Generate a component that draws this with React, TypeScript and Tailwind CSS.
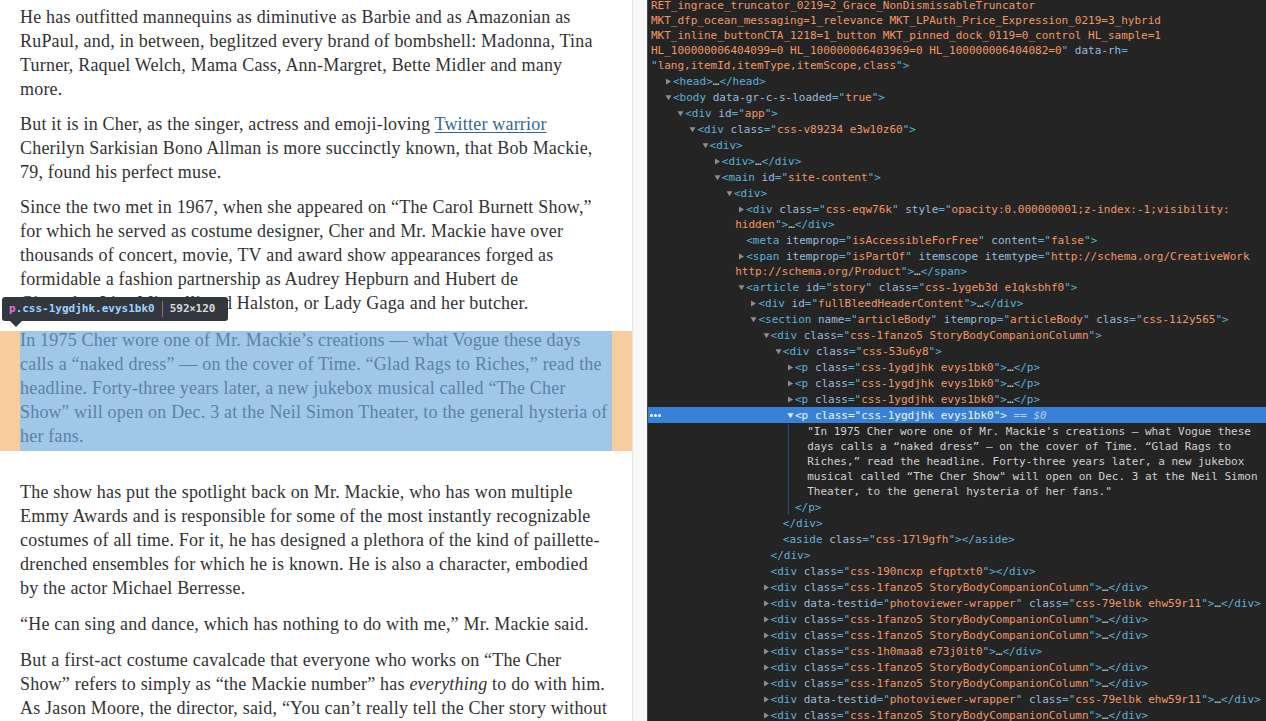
import React from 'react'

type Kind = 't' | 'a' | 'v' | 'x'
type Seg = [Kind, string]

interface INode {
  lvl: number
  tri?: 'r' | 'd'
  lines: Seg[][]
  sel?: boolean
  text?: boolean
  x?: number
}

const COLORS: Record<Kind, string> = {
  t: 'text-[#5db0d7]',
  a: 'text-[#9bbbdc]',
  v: 'text-[#f29766]',
  x: 'text-[#cfd0d0]',
}

// builds the segments of one opening tag, optionally collapsed
const tag = (name: string, attrs: [string, string?][], collapsed?: string, selfClose?: boolean): Seg[] => {
  const segs: Seg[] = [['t', '<' + name]]
  attrs.forEach(([k, v]) => {
    segs.push(['t', ' '], ['a', k])
    if (v !== undefined) segs.push(['t', '="'], ['v', v], ['t', '"'])
  })
  segs.push(['t', '>'])
  if (collapsed) segs.push(['x', '…'], ['t', '</' + collapsed + '>'])
  if (selfClose) segs.push(['t', '</' + name + '>'])
  return segs
}

const fanzo = (): INode => ({
  lvl: 9,
  tri: 'r',
  lines: [tag('div', [['class', 'css-1fanzo5 StoryBodyCompanionColumn']], 'div')],
})
const photo = (): INode => ({
  lvl: 9,
  tri: 'r',
  lines: [tag('div', [['data-testid', 'photoviewer-wrapper'], ['class', 'css-79elbk ehw59r11']], 'div')],
})
const para = (): INode => ({ lvl: 11, tri: 'r', lines: [tag('p', [['class', 'css-1ygdjhk evys1bk0']], 'p')] })

const TOP: INode[] = [
  {
    lvl: 0,
    x: 3,
    lines: [
      [['v', 'RET_ingrace_truncator_0219=2_Grace_NonDismissableTruncator']],
      [['v', 'MKT_dfp_ocean_messaging=1_relevance MKT_LPAuth_Price_Expression_0219=3_hybrid']],
      [['v', 'MKT_inline_buttonCTA_1218=1_button MKT_pinned_dock_0119=0_control HL_sample=1']],
      [
        ['v', 'HL_100000006404099=0 HL_100000006403969=0 HL_100000006404082=0'],
        ['t', '"'],
        ['a', ' data-rh'],
        ['t', '='],
      ],
      [['t', '"'], ['v', 'lang,itemId,itemType,itemScope,class'], ['t', '">']],
    ],
  },
  { lvl: 1, tri: 'r', lines: [tag('head', [], 'head')] },
  { lvl: 1, tri: 'd', lines: [tag('body', [['data-gr-c-s-loaded', 'true']])] },
  { lvl: 2, tri: 'd', lines: [tag('div', [['id', 'app']])] },
  { lvl: 3, tri: 'd', lines: [tag('div', [['class', 'css-v89234 e3w10z60']])] },
  { lvl: 4, tri: 'd', lines: [tag('div', [])] },
  { lvl: 5, tri: 'r', lines: [tag('div', [], 'div')] },
  { lvl: 5, tri: 'd', lines: [tag('main', [['id', 'site-content']])] },
  { lvl: 6, tri: 'd', lines: [tag('div', [])] },
  {
    lvl: 7,
    tri: 'r',
    lines: [
      [
        ['t', '<div'],
        ['t', ' '],
        ['a', 'class'],
        ['t', '="'],
        ['v', 'css-eqw76k'],
        ['t', '"'],
        ['t', ' '],
        ['a', 'style'],
        ['t', '="'],
        ['v', 'opacity:0.000000001;z-index:-1;visibility:'],
      ],
      [['v', 'hidden'], ['t', '">'], ['x', '…'], ['t', '</div>']],
    ],
  },
  { lvl: 7, lines: [tag('meta', [['itemprop', 'isAccessibleForFree'], ['content', 'false']])] },
  {
    lvl: 7,
    tri: 'r',
    lines: [
      [
        ['t', '<span'],
        ['t', ' '],
        ['a', 'itemprop'],
        ['t', '="'],
        ['v', 'isPartOf'],
        ['t', '"'],
        ['t', ' '],
        ['a', 'itemscope'],
        ['t', ' '],
        ['a', 'itemtype'],
        ['t', '="'],
        ['v', 'http://schema.org/CreativeWork'],
      ],
      [['v', 'http://schema.org/Product'], ['t', '">'], ['x', '…'], ['t', '</span>']],
    ],
  },
  { lvl: 7, tri: 'd', lines: [tag('article', [['id', 'story'], ['class', 'css-1ygeb3d e1qksbhf0']])] },
  { lvl: 8, tri: 'r', lines: [tag('div', [['id', 'fullBleedHeaderContent']], 'div')] },
  {
    lvl: 8,
    tri: 'd',
    lines: [tag('section', [['name', 'articleBody'], ['itemprop', 'articleBody'], ['class', 'css-1i2y565']])],
  },
  { lvl: 9, tri: 'd', lines: [tag('div', [['class', 'css-1fanzo5 StoryBodyCompanionColumn']])] },
  { lvl: 10, tri: 'd', lines: [tag('div', [['class', 'css-53u6y8']])] },
  para(),
  para(),
  para(),
  { lvl: 11, tri: 'd', sel: true, lines: [tag('p', [['class', 'css-1ygdjhk evys1bk0']])] },
]

const CHILDREN: INode[] = [
  {
    lvl: 12,
    text: true,
    lines: [
      [['x', '"In 1975 Cher wore one of Mr. Mackie\'s creations — what Vogue these']],
      [['x', 'days calls a “naked dress” — on the cover of Time. “Glad Rags to']],
      [['x', 'Riches,” read the headline. Forty-three years later, a new jukebox']],
      [['x', 'musical called “The Cher Show" will open on Dec. 3 at the Neil Simon']],
      [['x', 'Theater, to the general hysteria of her fans."']],
    ],
  },
  { lvl: 11, lines: [[['t', '</p>']]] },
]

const BOTTOM: INode[] = [
  { lvl: 10, lines: [[['t', '</div>']]] },
  { lvl: 10, lines: [tag('aside', [['class', 'css-17l9gfh']], undefined, true)] },
  { lvl: 9, lines: [[['t', '</div>']]] },
  { lvl: 9, lines: [tag('div', [['class', 'css-190ncxp efqptxt0']], undefined, true)] },
  fanzo(),
  photo(),
  fanzo(),
  fanzo(),
  { lvl: 9, tri: 'r', lines: [tag('div', [['class', 'css-1h0maa8 e73j0it0']], 'div')] },
  fanzo(),
  fanzo(),
  photo(),
  fanzo(),
  fanzo(),
]

const triX = (lvl: number) => 17 + (lvl - 1) * 12.2

const Triangle = ({ dir, light }: { dir: 'r' | 'd'; light?: boolean }) => (
  <span className="inline-flex w-[8px] items-center">
    <svg width="7" height="7" viewBox="0 0 7 7" className={light ? 'fill-[#eef3fb]' : 'fill-[#8d8d8d]'}>
      {dir === 'r' ? <path d="M1 0.5 L6 3.5 L1 6.5 Z" /> : <path d="M0.5 1.2 L6.5 1.2 L3.5 6.2 Z" />}
    </svg>
  </span>
)

const TreeRow = ({ node }: { node: INode }) => {
  const base = node.x !== undefined ? node.x : triX(node.lvl)
  return (
    <div className={`relative pt-px ${node.sel ? 'bg-[#3881d7]' : ''}`}>
      {node.sel && (
        <span className="absolute left-[2px] top-[7px] flex gap-[1px]">
          <span className="h-[3px] w-[3px] rounded-full bg-white" />
          <span className="h-[3px] w-[3px] rounded-full bg-white" />
          <span className="h-[3px] w-[3px] rounded-full bg-white" />
        </span>
      )}
      {node.lines.map((segs, i) => {
        let pad = base
        if (node.x === undefined) {
          if (i === 0) pad = node.tri ? base : base + 8
          else pad = node.text ? base + 8 : base - 3
        }
        return (
          <div key={i} className="h-[15px] whitespace-pre leading-[15px]" style={{ paddingLeft: pad }}>
            {i === 0 && node.tri && <Triangle dir={node.tri} light={node.sel} />}
            {segs.map(([k, s], j) => (
              <span key={j} className={node.sel ? 'text-[#f1f5fb]' : COLORS[k]}>
                {s}
              </span>
            ))}
            {node.sel && <span className="italic text-[#b4cdef]"> == $0</span>}
          </div>
        )
      })}
    </div>
  )
}

const Line = ({ children }: { children: React.ReactNode }) => (
  <div className="h-[24px] whitespace-nowrap leading-[18px]">{children}</div>
)

const App = () => (
  <div className="flex h-[721px] w-full overflow-hidden bg-white">
    <div className="w-[632px] shrink-0 pt-[8px] font-['Liberation_Serif',serif] text-[18px] tracking-[0.2px] text-[#333]">
      <div className="mx-[20px] mb-[11px]">
        <Line>He has outfitted mannequins as diminutive as Barbie and as Amazonian as</Line>
        <Line>RuPaul, and, in between, beglitzed every brand of bombshell: Madonna, Tina</Line>
        <Line>Turner, Raquel Welch, Mama Cass, Ann-Margret, Bette Midler and many</Line>
        <Line>more.</Line>
      </div>
      <div className="mx-[20px] mb-[11px]">
        <Line>
          But it is in Cher, as the singer, actress and emoji-loving{' '}
          <span className="text-[#326891] underline underline-offset-2">Twitter warrior</span>
        </Line>
        <Line>Cherilyn Sarkisian Bono Allman is more succinctly known, that Bob Mackie,</Line>
        <Line>79, found his perfect muse.</Line>
      </div>
      <div className="mx-[20px] mb-[13px]">
        <Line>Since the two met in 1967, when she appeared on “The Carol Burnett Show,”</Line>
        <Line>for which he served as costume designer, Cher and Mr. Mackie have over</Line>
        <Line>thousands of concert, movie, TV and award show appearances forged as</Line>
        <Line>formidable a fashion partnership as Audrey Hepburn and Hubert de</Line>
        <Line>Givenchy, Liza Minnelli and Halston, or Lady Gaga and her butcher.</Line>
      </div>
      <div className="relative mx-[20px] mb-[32px]">
        <Line>In 1975 Cher wore one of Mr. Mackie’s creations — what Vogue these days</Line>
        <Line>calls a “naked dress” — on the cover of Time. “Glad Rags to Riches,” read the</Line>
        <Line>headline. Forty-three years later, a new jukebox musical called “The Cher</Line>
        <Line>Show" will open on Dec. 3 at the Neil Simon Theater, to the general hysteria of</Line>
        <Line>her fans.</Line>
        <div className="absolute inset-0 bg-[rgba(111,168,220,0.66)]" />
        <div className="absolute -left-[20px] top-0 bottom-0 w-[20px] bg-[rgba(246,178,107,0.66)]" />
        <div className="absolute -right-[20px] top-0 bottom-0 w-[20px] bg-[rgba(246,178,107,0.66)]" />
        <div className="absolute -left-[18px] -top-[34px] flex h-[24px] w-[226px] items-center rounded-[3px] bg-[#333740] pl-[7px] font-['DejaVu_Sans_Mono',monospace] text-[11px] font-bold leading-[14px] tracking-normal">
          <span className="text-[#e776e0]">p</span>
          <span className="text-[#9cd4ff]">.css-1ygdjhk.evys1bk0</span>
          <span className="mx-[7px] h-[16px] w-px bg-[#787b82]" />
          <span className="text-[#d9d9d9]">
            592<span className="text-[10px]">×</span>120
          </span>
          <span className="absolute left-[8px] top-[24px] h-0 w-0 border-x-[6px] border-t-[6px] border-x-transparent border-t-[#333740]" />
        </div>
      </div>
      <div className="mx-[20px] mb-[12px]">
        <Line>The show has put the spotlight back on Mr. Mackie, who has won multiple</Line>
        <Line>Emmy Awards and is responsible for some of the most instantly recognizable</Line>
        <Line>costumes of all time. For it, he has designed a plethora of the kind of paillette-</Line>
        <Line>drenched ensembles for which he is known. He is also a character, embodied</Line>
        <Line>by the actor Michael Berresse.</Line>
      </div>
      <div className="mx-[20px] mb-[12px]">
        <Line>“He can sing and dance, which has nothing to do with me,” Mr. Mackie said.</Line>
      </div>
      <div className="mx-[20px]">
        <Line>But a first-act costume cavalcade that everyone who works on “The Cher</Line>
        <Line>
          Show” refers to simply as “the Mackie number” has <em>everything</em> to do with him.
        </Line>
        <Line>As Jason Moore, the director, said, “You can’t really tell the Cher story without</Line>
      </div>
    </div>

    <div className="w-[15px] shrink-0 border-l border-[#e6e6e6] bg-[#f7f7f7]" />
    <div className="w-px shrink-0 bg-[#4a4a4a]" />

    <div className="min-w-0 flex-1 overflow-hidden bg-[#242424] font-['DejaVu_Sans_Mono',monospace] text-[11px]">
      <div className="-mt-[3.5px]">
        {TOP.map((n, i) => (
          <TreeRow key={i} node={n} />
        ))}
        <div className="relative">
          <div className="absolute left-[140px] top-[1px] bottom-0 w-px bg-[#2e4d7c]" />
          {CHILDREN.map((n, i) => (
            <TreeRow key={i} node={n} />
          ))}
        </div>
        {BOTTOM.map((n, i) => (
          <TreeRow key={i} node={n} />
        ))}
      </div>
    </div>
  </div>
)

export default App
